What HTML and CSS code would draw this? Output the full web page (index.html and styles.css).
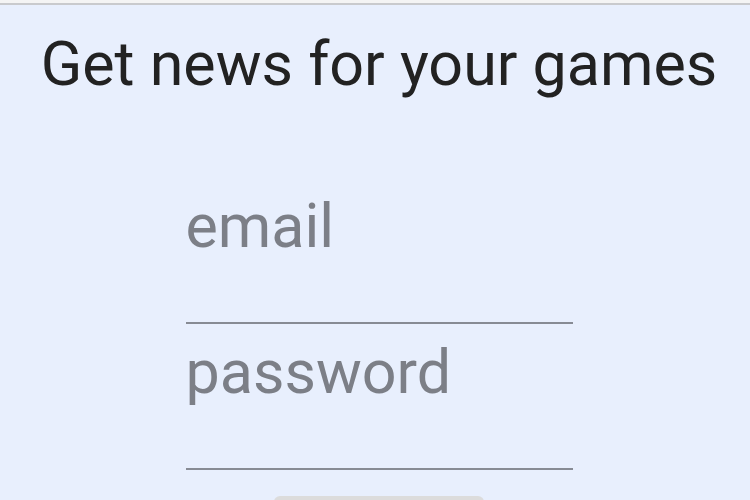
FILE: index.html
```html
<!DOCTYPE html>
<html>
<head>
<meta charset="utf-8">
<link rel="stylesheet" href="styles.css">
</head>
<body>
<div class="topbar"></div>
<main class="page">
  <h1 class="title">Get news for your games</h1>
  <form class="form">
    <label class="field">
      <span class="placeholder">email</span>
    </label>
    <label class="field">
      <span class="placeholder">password</span>
    </label>
    <button type="button" class="btn"></button>
  </form>
</main>
</body>
</html>
```

FILE: styles.css
```css
html, body {
  margin: 0;
  padding: 0;
  height: 100%;
  overflow: hidden;
}
body {
  background: #e8effd;
  font-family: Roboto, "Liberation Sans", sans-serif;
}
.topbar {
  height: 3px;
  background: #f4f4f4;
  border-bottom: 2px solid #c9cacd;
}
.page {
  display: flex;
  flex-direction: column;
  align-items: center;
  padding-left: 8px;
}
.title {
  margin: 23px 0 0 0;
  font-size: 61px;
  font-weight: 400;
  line-height: 72px;
  color: #222;
  white-space: nowrap;
}
.form {
  display: flex;
  flex-direction: column;
  gap: 12px;
  width: 387px;
  margin-top: 90px;
}
.field {
  display: block;
  padding-bottom: 60px;
  border-bottom: 2px solid #878b94;
}
.placeholder {
  display: block;
  font-size: 61px;
  line-height: 72px;
  color: #7c7f87;
}
.btn {
  align-self: center;
  margin-top: 14px;
  width: 210px;
  height: 40px;
  border: none;
  border-radius: 6px;
  background: #dcdcdc;
}
```
